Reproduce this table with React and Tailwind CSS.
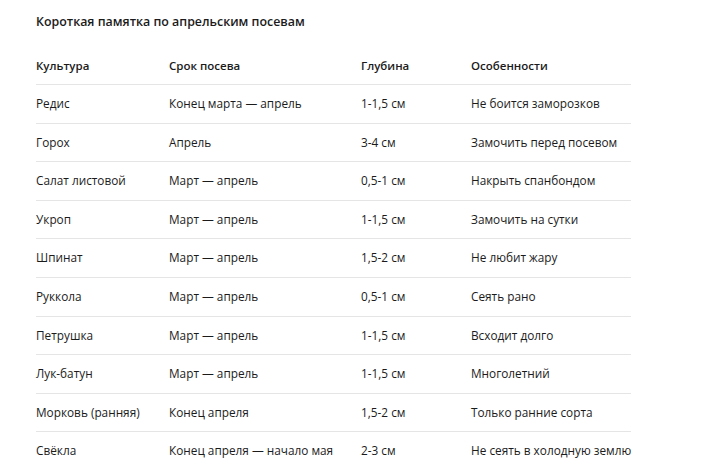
import React from "react";

const rows = [
  ["Редис", "Конец марта — апрель", "1-1,5 см", "Не боится заморозков"],
  ["Горох", "Апрель", "3-4 см", "Замочить перед посевом"],
  ["Салат листовой", "Март — апрель", "0,5-1 см", "Накрыть спанбондом"],
  ["Укроп", "Март — апрель", "1-1,5 см", "Замочить на сутки"],
  ["Шпинат", "Март — апрель", "1,5-2 см", "Не любит жару"],
  ["Руккола", "Март — апрель", "0,5-1 см", "Сеять рано"],
  ["Петрушка", "Март — апрель", "1-1,5 см", "Всходит долго"],
  ["Лук-батун", "Март — апрель", "1-1,5 см", "Многолетний"],
  ["Морковь (ранняя)", "Конец апреля", "1,5-2 см", "Только ранние сорта"],
  ["Свёкла", "Конец апреля — начало мая", "2-3 см", "Не сеять в холодную землю"],
];

export default function App() {
  return (
    <div className="w-[715px] h-[469px] overflow-hidden bg-white text-[#1b1b1b] font-['Open_Sans',sans-serif] text-[11.8px]">
      <div className="pl-[36px] pt-[12px]">
        <div className="font-semibold text-[12.4px] leading-[20px]">Короткая памятка по апрельским посевам</div>
        <table className="mt-[15px] w-[595px] border-collapse table-fixed">
          <colgroup>
            <col className="w-[133px]" />
            <col className="w-[192px]" />
            <col className="w-[110px]" />
            <col className="w-[160px]" />
          </colgroup>
          <thead>
            <tr className="border-b border-[#e5e5e5]">
              <th className="text-left font-semibold text-[11.5px] leading-[20px] pt-[9px] pb-[8px] whitespace-nowrap">Культура</th>
              <th className="text-left font-semibold text-[11.5px] leading-[20px] pt-[9px] pb-[8px] whitespace-nowrap">Срок посева</th>
              <th className="text-left font-semibold text-[11.5px] leading-[20px] pt-[9px] pb-[8px] whitespace-nowrap">Глубина</th>
              <th className="text-left font-semibold text-[11.5px] leading-[20px] pt-[9px] pb-[8px] whitespace-nowrap">Особенности</th>
            </tr>
          </thead>
          <tbody>
            {rows.map((r, i) => (
              <tr key={i} className={i < rows.length - 1 ? "border-b border-[#e5e5e5]" : ""}>
                {r.map((c, j) => (
                  <td key={j} className="leading-[19.6px] py-[9px] whitespace-nowrap">{c}</td>
                ))}
              </tr>
            ))}
          </tbody>
        </table>
      </div>
    </div>
  );
}
